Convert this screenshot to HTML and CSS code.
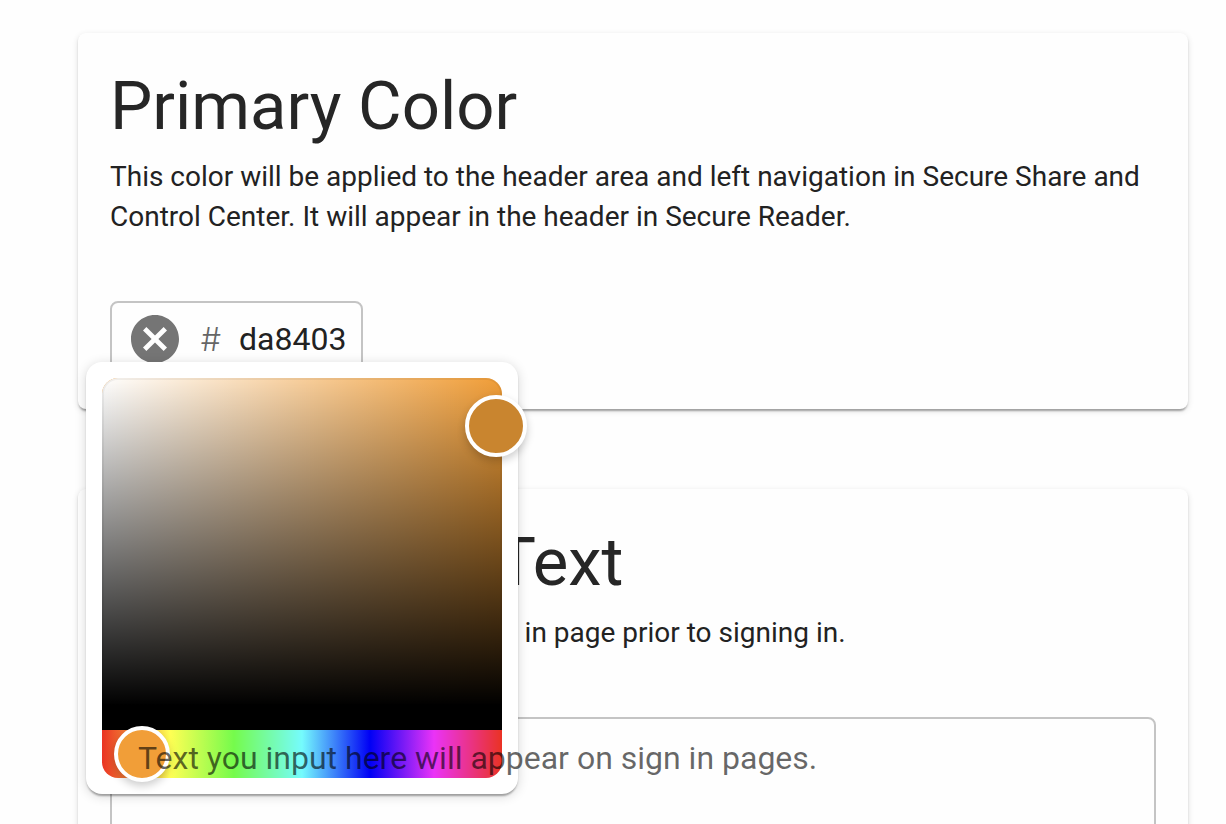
FILE: index.html
```html
<!DOCTYPE html>
<html lang="en">
<head>
  <meta charset="UTF-8">
  <meta name="viewport" content="width=device-width, initial-scale=1.0">
  <title>Branding</title>
  <link rel="stylesheet" href="styles.css">
</head>
<body>
  <main class="settings">
    <section class="card">
      <h2 class="card-title">Primary Color</h2>
      <p class="card-text">This color will be applied to the header area and left navigation in Secure Share and Control Center. It will appear in the header in Secure Reader.</p>
      <div class="color-field">
        <button class="clear-button" type="button" aria-label="Clear color">
          <svg viewBox="2 2 20 20" aria-hidden="true">
            <path d="M12 2C6.47 2 2 6.47 2 12s4.47 10 10 10 10-4.47 10-10S17.53 2 12 2zm5 13.59L15.59 17 12 13.41 8.41 17 7 15.59 10.59 12 7 8.41 8.41 7 12 10.59 15.59 7 17 8.41 13.41 12 17 15.59z"/>
          </svg>
        </button>
        <label class="hash" for="primaryColor">#</label>
        <input class="color-input" id="primaryColor" type="text" value="da8403" maxlength="6" spellcheck="false">

        <div class="picker-popover">
          <div class="picker">
            <div class="saturation">
              <div class="saturation-pointer" role="slider" tabindex="0" aria-label="Color" aria-valuetext="Saturation 99%, Brightness 85%" style="left: 98.5%; top: 14.6%"></div>
            </div>
            <div class="hue">
              <input class="hue-slider" type="range" min="0" max="360" value="36" aria-label="Hue">
            </div>
          </div>
        </div>
      </div>
    </section>

    <section class="card">
      <h2 class="card-title">Sign In Page Text</h2>
      <p class="card-text">This text will appear on your sign in page prior to signing in.</p>
      <div class="text-field">
        <label class="text-label" for="signInText">Text you input here will appear on sign in pages.</label>
        <textarea class="text-input" id="signInText"></textarea>
      </div>
    </section>
  </main>
</body>
</html>
```
FILE: styles.css
```css
* {
  box-sizing: border-box;
}

body {
  margin: 0;
  height: 100vh;
  overflow: hidden;
  background: #fefefe;
  color: #222;
  font-family: Roboto, "Liberation Sans", sans-serif;
}

.settings {
  display: flex;
  flex-direction: column;
  gap: 80px;
  padding: 33px 38px 33px 78px;
}

.card {
  padding: 32px;
  background: #fefefe;
  border-radius: 8px;
  box-shadow: 0 4px 2px -2px rgba(0,0,0,0.2), 0 2px 2px rgba(0,0,0,0.14), 0 2px 6px rgba(0,0,0,0.12);
}

.card-title {
  margin: 0 0 10px;
  font-size: 67px;
  font-weight: 400;
  line-height: 82px;
  color: #262626;
}

.card-text {
  margin: 0 0 64px;
  font-size: 28px;
  line-height: 40px;
}

/* color field */
.color-field {
  position: relative;
  display: inline-flex;
  align-items: center;
  height: 76px;
  padding: 0 10px 0 19px;
  border: 2px solid #c4c4c4;
  border-radius: 8px;
  vertical-align: top;
}

.clear-button {
  width: 48px;
  height: 48px;
  padding: 0;
  border: 0;
  background: none;
  cursor: pointer;
}

.clear-button svg {
  display: block;
  fill: #757575;
}

.hash {
  width: 24px;
  margin: 0 16px 0 20px;
  font-family: Inter, Roboto, sans-serif;
  font-size: 32px;
  font-weight: 300;
  text-align: center;
  color: #666;
}

.color-input {
  width: 112px;
  padding: 0;
  border: 0;
  outline: 0;
  background: none;
  font: inherit;
  font-size: 32px;
  color: #222;
}

/* picker */
.picker-popover {
  position: absolute;
  top: 59px;
  left: -26px;
  z-index: 1;
  padding: 16px;
  background: #fff;
  border-radius: 16px;
  box-shadow: 0 4px 2px -2px rgba(0,0,0,0.2), 0 2px 2px rgba(0,0,0,0.14), 0 2px 12px rgba(0,0,0,0.16);
}

.picker {
  display: flex;
  flex-direction: column;
  width: 400px;
  height: 400px;
}

.saturation {
  position: relative;
  flex: 1;
  border-bottom: 24px solid #000;
  border-radius: 16px 16px 0 0;
  background-color: #f19e38;
  background-image: linear-gradient(to top, #000, transparent), linear-gradient(to right, #fff, rgba(255,255,255,0));
  box-shadow: inset 0 0 0 2px rgba(0,0,0,0.05);
}

.saturation-pointer {
  position: absolute;
  width: 62px;
  height: 62px;
  border: 4px solid #fff;
  border-radius: 50%;
  background: #c9852f;
  box-shadow: 0 4px 8px rgba(0,0,0,0.2);
  transform: translate(-50%, -50%);
}

.hue {
  height: 48px;
  border-radius: 0 0 16px 16px;
  background: linear-gradient(to right, #ea3323 0%, #ffff54 17%, #75fb4c 33%, #75fbfd 50%, #0000f5 67%, #ea33f7 83%, #ea3323 100%);
}

/* half a thumb wider on both sides, so the thumb centre reaches the ends */
.hue-slider {
  position: relative;
  display: block;
  width: calc(100% + 56px);
  height: 48px;
  margin: 0 -28px;
  background: none;
  -webkit-appearance: none;
  appearance: none;
}

.hue-slider::-webkit-slider-thumb {
  -webkit-appearance: none;
  width: 56px;
  height: 56px;
  border: 4px solid #fff;
  border-radius: 50%;
  background: #f19e38;
  box-shadow: 0 4px 8px rgba(0,0,0,0.2);
}

/* sign in text */
.text-field {
  position: relative;
}

.text-label {
  position: absolute;
  top: 18px;
  left: 28px;
  z-index: 2;
  font-size: 32px;
  line-height: 46px;
  color: rgba(0,0,0,0.6);
  pointer-events: none;
}

.text-input {
  display: block;
  width: 100%;
  height: 220px;
  padding: 16px 26px;
  border: 2px solid #c4c4c4;
  border-radius: 8px;
  outline: 0;
  background: none;
  font: inherit;
  font-size: 32px;
  resize: none;
}
```
